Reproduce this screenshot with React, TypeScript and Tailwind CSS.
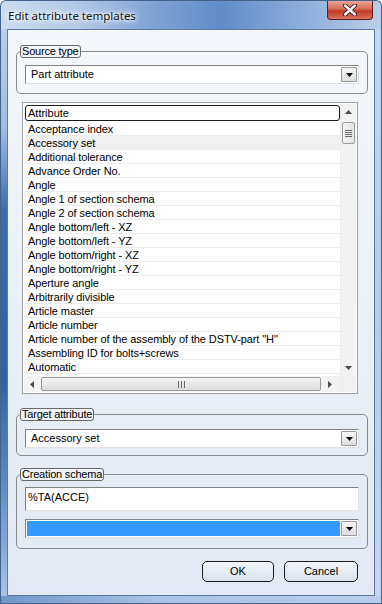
import React from "react";

const rows = [
  "Acceptance index",
  "Accessory set",
  "Additional tolerance",
  "Advance Order No.",
  "Angle",
  "Angle 1 of section schema",
  "Angle 2 of section schema",
  "Angle bottom/left - XZ",
  "Angle bottom/left - YZ",
  "Angle bottom/right - XZ",
  "Angle bottom/right - YZ",
  "Aperture angle",
  "Arbitrarily divisible",
  "Article master",
  "Article number",
  'Article number of the assembly of the DSTV-part "H"',
  "Assembling ID for bolts+screws",
  "Automatic",
];

function DropBtn() {
  return (
    <div className="w-[16px] my-[1px] mr-[1px] flex items-center justify-center border border-[#9a9a9a] bg-[linear-gradient(#f6f6f6,#dedede)] rounded-[1px]">
      <svg width="7" height="4" viewBox="0 0 7 4">
        <path d="M0 0H7L3.5 4Z" fill="#000" />
      </svg>
    </div>
  );
}

function Combo({ text, blue }: { text: string; blue?: boolean }) {
  return (
    <div className="flex h-[19px] border border-t-[#828282] border-l-[#828282] border-r-[#e2e2e2] border-b-[#e2e2e2] bg-white">
      <div
        className={
          blue
            ? "flex-1 flex items-center pl-[5px] bg-[#3399ff] my-[1px] ml-[1px] mr-[1px]"
            : "flex-1 flex items-center pl-[5px] bg-white"
        }
      >
        {text}
      </div>
      <DropBtn />
    </div>
  );
}

function Group({
  label,
  children,
  className,
}: {
  label: string;
  children: React.ReactNode;
  className: string;
}) {
  return (
    <fieldset className={"border border-[#8a8a8a] rounded-[5px] px-[8px] " + className}>
      <legend className="-ml-[5px] px-[1px] h-[13px] leading-[11px] border border-[#6a6a6a] rounded-[3px] bg-[#f1f4f9] tracking-[-0.2px]">
        {label}
      </legend>
      {children}
    </fieldset>
  );
}

function VScroll() {
  return (
    <div className="w-[16px] flex flex-col items-center bg-[#f3f3f3] border-l border-[#ececec]">
      <div className="h-[16px] w-full flex items-center justify-center">
        <svg width="7" height="4" viewBox="0 0 7 4">
          <path d="M0 4H7L3.5 0Z" fill="#4a4a4a" />
        </svg>
      </div>
      <div className="mt-[2px] w-[13px] h-[22px] rounded-[2px] border border-[#9a9a9a] bg-[linear-gradient(90deg,#f4f4f4,#e2e2e2)] flex flex-col items-center justify-center gap-[1px]">
        <div className="w-[7px] h-[1px] bg-[#6a6a6a]" />
        <div className="w-[7px] h-[1px] bg-[#6a6a6a]" />
        <div className="w-[7px] h-[1px] bg-[#6a6a6a]" />
        <div className="w-[7px] h-[1px] bg-[#6a6a6a]" />
      </div>
      <div className="flex-1" />
      <div className="h-[16px] w-full flex items-center justify-center">
        <svg width="7" height="4" viewBox="0 0 7 4">
          <path d="M0 0H7L3.5 4Z" fill="#4a4a4a" />
        </svg>
      </div>
    </div>
  );
}

function HScroll() {
  return (
    <div className="h-[16px] flex bg-[#f3f3f3]">
      <div className="flex-1 flex items-center">
        <div className="w-[16px] h-full flex items-center justify-center">
          <svg width="4" height="7" viewBox="0 0 4 7">
            <path d="M4 0V7L0 3.5Z" fill="#4a4a4a" />
          </svg>
        </div>
        <div className="ml-[1px] flex-1 h-[14px] rounded-[2px] border border-[#9a9a9a] bg-[linear-gradient(#f4f4f4,#dcdcdc)] flex items-center justify-center gap-[2px]">
          <div className="w-[1px] h-[7px] bg-[#6a6a6a]" />
          <div className="w-[1px] h-[7px] bg-[#6a6a6a]" />
          <div className="w-[1px] h-[7px] bg-[#6a6a6a]" />
        </div>
        <div className="w-[18px] h-full flex items-center justify-center">
          <svg width="4" height="7" viewBox="0 0 4 7">
            <path d="M0 0V7L4 3.5Z" fill="#4a4a4a" />
          </svg>
        </div>
      </div>
      <div className="w-[17px] bg-[#f0f0f0]" />
    </div>
  );
}

function Button({ label, w }: { label: string; w: string }) {
  return (
    <div
      className={
        "h-[21px] flex items-center justify-center border border-[#1a1a1a] rounded-[5px] bg-[linear-gradient(#f3f6fa,#d8e2ee)] " +
        w
      }
    >
      {label}
    </div>
  );
}

export default function App() {
  return (
    <div
      className="w-[382px] h-[604px] flex flex-col overflow-hidden text-[11px] text-black"
      style={{ fontFamily: '"Liberation Sans", Arial, sans-serif' }}
    >
      {/* title bar */}
      <div className="h-[29px] flex items-start bg-[linear-gradient(90deg,#cddcf0_0%,#b3c9e7_20%,#7ea3d5_40%,#5f8cc8_58%,#89acdb_78%,#b9cee9_100%)] rounded-t-[6px] border-t border-x border-[#44628a]">
        <div
          className="mt-[6px] ml-[7px] text-[11.5px] text-[#111] [text-shadow:0_0_6px_#ffffff,0_0_6px_#ffffff,0_0_3px_#ffffff]"
          style={{ fontFamily: '"Noto Sans", "Open Sans", sans-serif' }}
        >
          Edit attribute templates
        </div>
        <div className="flex-1" />
        <div className="mr-[8px] w-[46px] h-[19px] rounded-b-[4px] border border-t-0 border-[#5a2020] bg-[linear-gradient(#e9a596_0%,#d56a57_45%,#bf3b25_55%,#d9725d_100%)] flex items-center justify-center">
          <svg width="14" height="12" viewBox="0 0 14 12">
            <path d="M2 1.5L12 10.5M12 1.5L2 10.5" stroke="#3a1010" strokeWidth="4.2" strokeLinecap="round" />
            <path d="M2 1.5L12 10.5M12 1.5L2 10.5" stroke="#ffffff" strokeWidth="2.4" strokeLinecap="round" />
          </svg>
        </div>
      </div>

      <div className="flex-1 flex">
        {/* left frame */}
        <div className="w-[7px] border-l border-[#44628a] bg-[linear-gradient(#b9cfea_0%,#9fbbe0_18%,#3a6cae_32%,#2f62a6_62%,#5f8ac4_80%,#a8c2e4_100%)]" />

        {/* client */}
        <div className="flex-1 flex flex-col border border-[#5a7aa3] bg-[linear-gradient(#f4f7fb,#e2e9f4)]">
          <Group label="Source type" className="mt-[15px] ml-[8px] mr-[6px] pt-[7px] pb-[9px]">
            <Combo text="Part attribute" />
          </Group>

          {/* list */}
          <div className="mt-[8px] ml-[14px] mr-[16px] h-[292px] border border-[#a0a0a0] bg-white p-[1px] flex flex-col">
            <div className="flex-1 flex">
              <div className="flex-1 flex flex-col pl-[1px]">
                <div className="mt-[1px] h-[16px] border border-[#1a1a1a] rounded-[3px] flex items-center pl-[2px] bg-white">
                  Attribute
                </div>
                <div className="mt-[1px]">
                  {rows.map((r, i) => (
                    <div
                      key={r}
                      className={
                        "h-[14px] flex items-center pl-[3px] pt-[1px] border-b border-[#ececec] whitespace-nowrap tracking-[-0.1px] " +
                        (i === 1 ? "bg-[#f0f0f0]" : "bg-white")
                      }
                    >
                      {r}
                    </div>
                  ))}
                </div>
              </div>
              <VScroll />
            </div>
            <HScroll />
          </div>

          <Group label="Target attribute" className="mt-[14px] ml-[8px] mr-[6px] pt-[8px] pb-[7px]">
            <Combo text="Accessory set" />
          </Group>

          <Group label="Creation schema" className="mt-[12px] ml-[8px] mr-[6px] pt-[6px] pb-[10px]">
            <div className="h-[24px] border border-t-[#828282] border-l-[#828282] border-r-[#e2e2e2] border-b-[#e2e2e2] bg-white pl-[2px] pt-[3px] leading-[13px]">
              %TA(ACCE)
            </div>
            <div className="mt-[8px]">
              <Combo text="" blue />
            </div>
          </Group>

          <div className="mt-[12px] mr-[16px] flex justify-end gap-[10px]">
            <Button label="OK" w="w-[72px]" />
            <Button label="Cancel" w="w-[74px]" />
          </div>
        </div>

        {/* right frame */}
        <div className="w-[7px] border-r border-[#44628a] bg-[linear-gradient(#c4d6ee,#b6cbe7_50%,#c4d6ee)]" />
      </div>
      <div className="h-[8px] border-b border-x border-[#44628a] bg-[linear-gradient(90deg,#6f96cb,#a9c1e3_40%,#b9cde9)]" />
    </div>
  );
}
